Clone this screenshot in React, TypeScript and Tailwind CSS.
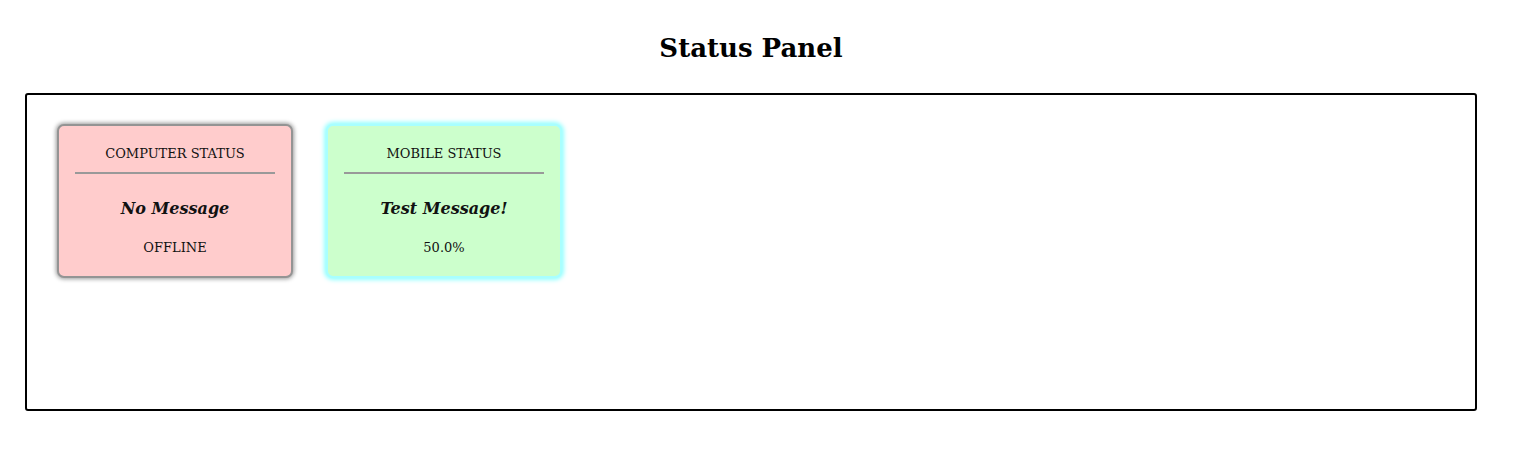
import React from 'react';

type Card = {
  title: string;
  message: string;
  status: string;
  tone: 'offline' | 'online';
};

const cards: Card[] = [
  { title: 'COMPUTER STATUS', message: 'No Message', status: 'OFFLINE', tone: 'offline' },
  { title: 'MOBILE STATUS', message: 'Test Message!', status: '50.0%', tone: 'online' },
];

const StatusCard: React.FC<{ card: Card }> = ({ card }) => {
  const toneClass =
    card.tone === 'offline'
      ? 'bg-[#ffcccc] border-[#949494] shadow-[0_0_4px_1px_rgba(0,0,0,0.4)]'
      : 'bg-[#ccffcc] border-[#a8ffff] shadow-[0_0_4px_2px_rgba(120,255,255,0.8)]';

  return (
    <div className={`w-[236px] h-[154px] rounded-[7px] border-2 px-4 pt-[19px] text-center ${toneClass}`}>
      <div className="text-[13px] leading-[18px] text-[#111]">{card.title}</div>
      <div className="mt-[9px] h-[2px] bg-[#999]" />
      <div className="mt-[24px] text-[16px] leading-[22px] font-bold italic text-[#111]">{card.message}</div>
      <div className="mt-[19px] text-[13px] leading-[18px] text-[#111]">{card.status}</div>
    </div>
  );
};

export default function App() {
  return (
    <div className="bg-white min-h-[459px] font-['DejaVu_Serif',Georgia,serif] text-black">
      <h1 className="w-[1502px] pt-[33px] text-center text-[26px] leading-[30px] font-bold">Status Panel</h1>
      <div className="ml-[25px] mt-[30px] w-[1452px] h-[318px] rounded-[3px] border-2 border-black flex items-start gap-[33px] pl-[30px] pt-[29px]">
        {cards.map(c => (
          <StatusCard key={c.title} card={c} />
        ))}
      </div>
    </div>
  );
}
